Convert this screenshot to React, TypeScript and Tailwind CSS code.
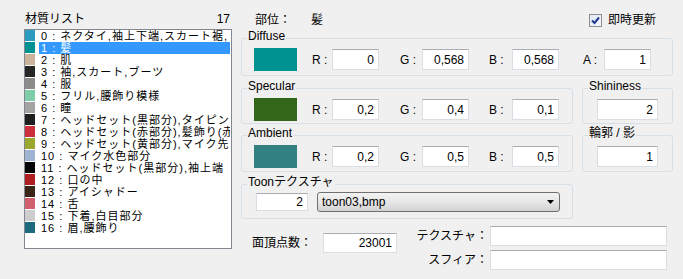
const FONT = "font-['Liberation_Sans','Noto_Sans_CJK_JP',sans-serif]";

const MATERIALS: [string, string][] = [
  ['#2b9cc0', 'ネクタイ,袖上下端,スカート裾,'],
  ['#009191', '髪'],
  ['#cbb39b', '肌'],
  ['#262626', '袖,スカート,ブーツ'],
  ['#8c8c8c', '服'],
  ['#7fcca8', 'フリル,腰飾り模様'],
  ['#a3a3a3', '瞳'],
  ['#1e1e1e', 'ヘッドセット(黒部分),タイピン'],
  ['#cc2e3c', 'ヘッドセット(赤部分),髪飾り(赤)'],
  ['#9aa92e', 'ヘッドセット(黄部分),マイク先'],
  ['#9fb4d2', 'マイク水色部分'],
  ['#050505', 'ヘッドセット(黒部分),袖上端'],
  ['#b01e22', '口の中'],
  ['#3a2619', 'アイシャドー'],
  ['#d0606e', '舌'],
  ['#cdcdcd', '下着,白目部分'],
  ['#1c6a7e', '眉,腰飾り'],
];

function TextBox({ value, className }: { value: string; className: string }) {
  return (
    <input
      readOnly
      value={value}
      className={`bg-white border border-[#dadde3] border-t-[#abadb3] text-right pr-[4px] text-[12px] leading-none text-black outline-none ${className}`}
    />
  );
}

function Group({ label, className, children }: { label: string; className: string; children: React.ReactNode }) {
  return (
    <fieldset className={`border border-[#d5dfe5] rounded-[3px] min-w-0 ${className}`}>
      <legend className="ml-[5px] px-[1px] leading-[14px] pb-[5px]">{label}</legend>
      {children}
    </fieldset>
  );
}

function ColorRow({ color, values, pb }: { color: string; values: [string, string][]; pb: string }) {
  const gaps = ['ml-[15px] w-[20px]', 'ml-[21px] w-[22px]', 'ml-[20px] w-[23px]', 'ml-[24px] w-[21px]'];
  return (
    <div className={`flex items-center h-[23px] ${pb}`}>
      <div className="ml-[12px] w-[43px] h-[23px] shrink-0" style={{ backgroundColor: color }} />
      {values.map(([k, v], i) => (
        <div key={k} className="flex items-center">
          <span className={`${gaps[i]} shrink-0`}>{k} :</span>
          <TextBox value={v} className="w-[47px] h-[21px]" />
        </div>
      ))}
    </div>
  );
}

export default function App() {
  return (
    <div className={`w-[683px] h-[279px] bg-[#f0f0f0] flex text-[12px] text-black ${FONT}`}>
      <div className="ml-[24px] w-[208px] pt-[12px]">
        <div className="flex justify-between h-[14px] leading-[14px] mb-[3px] pl-[1px] pr-[2px]">
          <span>材質リスト</span>
          <span>17</span>
        </div>
        <div className="border border-[#828790] bg-white h-[220px] overflow-hidden">
          {MATERIALS.map(([c, name], i) => (
            <div key={i} className="flex h-[12px]">
              <div className="w-[10px] h-[11px] shrink-0" style={{ backgroundColor: c }} />
              <div
                className={`ml-[4px] mr-[1px] flex-1 pl-[2px] text-[11px] tracking-[1px] leading-[12px] whitespace-nowrap overflow-hidden ${
                  i === 1 ? 'bg-[#3399ff] text-white' : ''
                }`}
              >
                {i} : {name}
              </div>
            </div>
          ))}
        </div>
      </div>

      <div className="ml-[9px] w-[432px] pt-[11px]">
        <div className="flex items-center h-[18px]">
          <span className="ml-[14px] w-[56px]">部位：</span>
          <span>髪</span>
          <div className="ml-auto mr-[17px] flex items-center">
            <span className="w-[13px] h-[13px] border border-[#8f8f8f] bg-gradient-to-br from-[#dfe9f5] to-[#f4f8fd] flex items-center justify-center">
              <svg width="9" height="9" viewBox="0 0 9 9">
                <path d="M1 4.5 L3.5 7 L8 1.5" fill="none" stroke="#21398c" strokeWidth="2" />
              </svg>
            </span>
            <span className="ml-[6px]">即時更新</span>
          </div>
        </div>

        <Group label="Diffuse" className="w-[432px]">
          <ColorRow
            color="#009191"
            pb="mb-[4px]"
            values={[
              ['R', '0'],
              ['G', '0,568'],
              ['B', '0,568'],
              ['A', '1'],
            ]}
          />
        </Group>

        <div className="flex mt-[3px]">
          <Group label="Specular" className="w-[332px]">
            <ColorRow
              color="#336619"
              pb="mb-[2px]"
              values={[
                ['R', '0,2'],
                ['G', '0,4'],
                ['B', '0,1'],
              ]}
            />
          </Group>
          <Group label="Shininess" className="ml-[9px] w-[91px]">
            <div className="flex items-center h-[23px] mb-[2px]">
              <TextBox value="2" className="ml-[14px] w-[61px] h-[21px]" />
            </div>
          </Group>
        </div>

        <div className="flex mt-[2px]">
          <Group label="Ambient" className="w-[332px]">
            <ColorRow
              color="#338080"
              pb="mb-[3px]"
              values={[
                ['R', '0,2'],
                ['G', '0,5'],
                ['B', '0,5'],
              ]}
            />
          </Group>
          <Group label="輪郭 / 影" className="ml-[9px] w-[91px]">
            <div className="flex items-center h-[23px] mb-[3px]">
              <TextBox value="1" className="ml-[14px] w-[61px] h-[21px]" />
            </div>
          </Group>
        </div>

        <Group label="Toonテクスチャ" className="w-[332px] mt-[3px]">
          <div className="flex items-center h-[20px] -mt-[2px] mb-[6px]">
            <TextBox value="2" className="ml-[14px] w-[52px] h-[18px]" />
            <div className="ml-[9px] w-[243px] h-[20px] rounded-[3px] border border-[#707070] bg-gradient-to-b from-[#f3f3f3] via-[#e6e6e6] to-[#d2d2d2] flex items-center pl-[4px] pr-[5px]">
              <span className="flex-1">toon03,bmp</span>
              <svg width="7" height="4" viewBox="0 0 7 4">
                <path d="M0 0 H7 L3.5 4 Z" fill="#000" />
              </svg>
            </div>
          </div>
        </Group>

        <div className="flex mt-[7px]">
          <div className="flex items-center h-[20px] mt-[7px]">
            <span className="ml-[11px] w-[71px]">面頂点数：</span>
            <TextBox value="23001" className="w-[74px] h-[20px]" />
          </div>
          <div className="ml-[16px] grid grid-cols-[75px_177px] gap-x-[2px] gap-y-[4px] items-center">
            <span className="text-right whitespace-nowrap leading-[20px]">テクスチャ：</span>
            <TextBox value="" className="h-[20px] w-[177px]" />
            <span className="text-right whitespace-nowrap leading-[20px]">スフィア：</span>
            <TextBox value="" className="h-[20px] w-[177px]" />
          </div>
        </div>
      </div>
    </div>
  );
}
